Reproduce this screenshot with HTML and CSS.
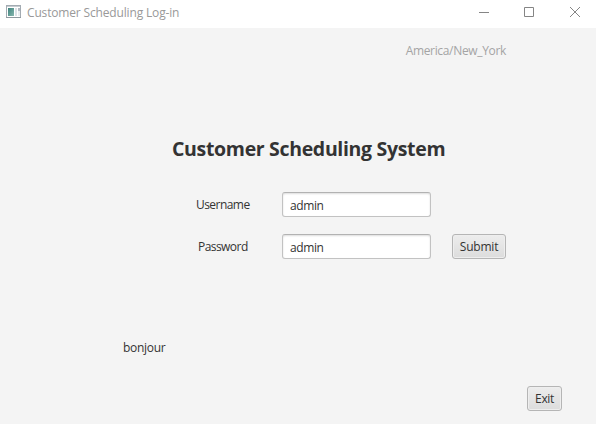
FILE: index.html
```html
<!DOCTYPE html>
<html lang="en">
<head>
<meta charset="utf-8">
<title>Customer Scheduling Log-in</title>
<link rel="stylesheet" href="styles.css">
</head>
<body>
<header class="titlebar">
  <svg class="app-icon" width="16" height="16" viewBox="0 0 16 16"><defs><linearGradient id="pane" x2="1" y2="1"><stop stop-color="#3d827d"/><stop offset="1" stop-color="#86b7ae"/></linearGradient></defs><rect x=".5" y="1.500" width="14" height="12" fill="#fff" stroke="#a3abb2"/><path d="M1 2.500h13" stroke="#c5cbd0"/><path d="M0 13.500h15" stroke="#8f999f"/><rect x="2" y="4" width="6" height="8" fill="url(#pane)"/><rect x="9" y="4" width="2" height="8" fill="#dce2e7"/><rect x="12" y="4" width="2" height="3" fill="#b2bac3"/><rect x="12" y="7" width="2" height="5" fill="#e9edf0"/></svg>
  <span class="caption">Customer Scheduling Log-in</span>
  <svg class="controls" width="138" height="28" viewBox="0 0 138 28" fill="none" stroke="#858585"><path d="M21 12.500h10M66.500 7.500h9v9h-9zM112 7l10 10M122 7l-10 10"/></svg>
</header>
<main class="scene">
  <p class="zone">America/New_York</p>
  <h1 class="heading">Customer Scheduling System</h1>
  <form class="login">
    <label class="label" for="user">Username</label>
    <input class="field" id="user" value="admin">
    <span></span>
    <label class="label label-pass" for="pass">Password</label>
    <input class="field" id="pass" value="admin">
    <button class="button" type="button">Submit</button>
  </form>
  <p class="message">bonjour</p>
  <footer class="footer"><button class="button exit" type="button">Exit</button></footer>
</main>
</body>
</html>
```
FILE: styles.css
```css
* { box-sizing: border-box; }
body { margin: 0; width: 596px; height: 424px; overflow: hidden; background: #f4f4f4; color: #333; font: 12px/16px "Open Sans", "Noto Sans", sans-serif; }
.titlebar { display: flex; height: 28px; background: #fff; color: #999; }
.app-icon { margin: 4px 5px 0 6px; }
.caption { padding-top: 5px; letter-spacing: -0.16px; }
.controls { margin-left: auto; }
.scene { display: flex; flex-direction: column; height: 396px; }
.zone { margin: 15px 90px 0 0; text-align: right; color: #a4a4a4; letter-spacing: -0.33px; }
.heading { margin: 76px 0 0 172px; font-size: 19.5px; line-height: 28px; font-weight: 700; letter-spacing: -0.33px; white-space: nowrap; }
.login { display: grid; grid-template-columns: 86px 149px 54px; grid-template-rows: 25px 25px; row-gap: 17px; margin: 29px 0 0 196px; align-items: center; }
.label { padding-top: 1px; letter-spacing: -0.55px; }
.label-pass { padding-left: 2px; }
.login .button { margin-left: 21px; }
.field { width: 149px; height: 25px; padding: 1px 7px 0; border: 1px solid #c2c2c2; border-top-color: #b2b2b2; border-radius: 3px; background: #fff; color: #333; font: inherit; letter-spacing: -0.4px; box-shadow: inset 0 1px 2px #ddd; }
.button { width: 54px; height: 25px; padding: 1px 0 0; border: 1px solid #b5b5b5; border-radius: 3px; background: linear-gradient(#ededed, #dcdcdc); color: #333; font: inherit; letter-spacing: -0.2px; box-shadow: inset 0 0 0 1px #eee; }
.message { margin: 81px 0 0 123px; letter-spacing: -0.3px; }
.footer { display: flex; justify-content: flex-end; margin: 30px 34px 0 0; }
.exit { width: 35px; letter-spacing: -0.35px; }
```
